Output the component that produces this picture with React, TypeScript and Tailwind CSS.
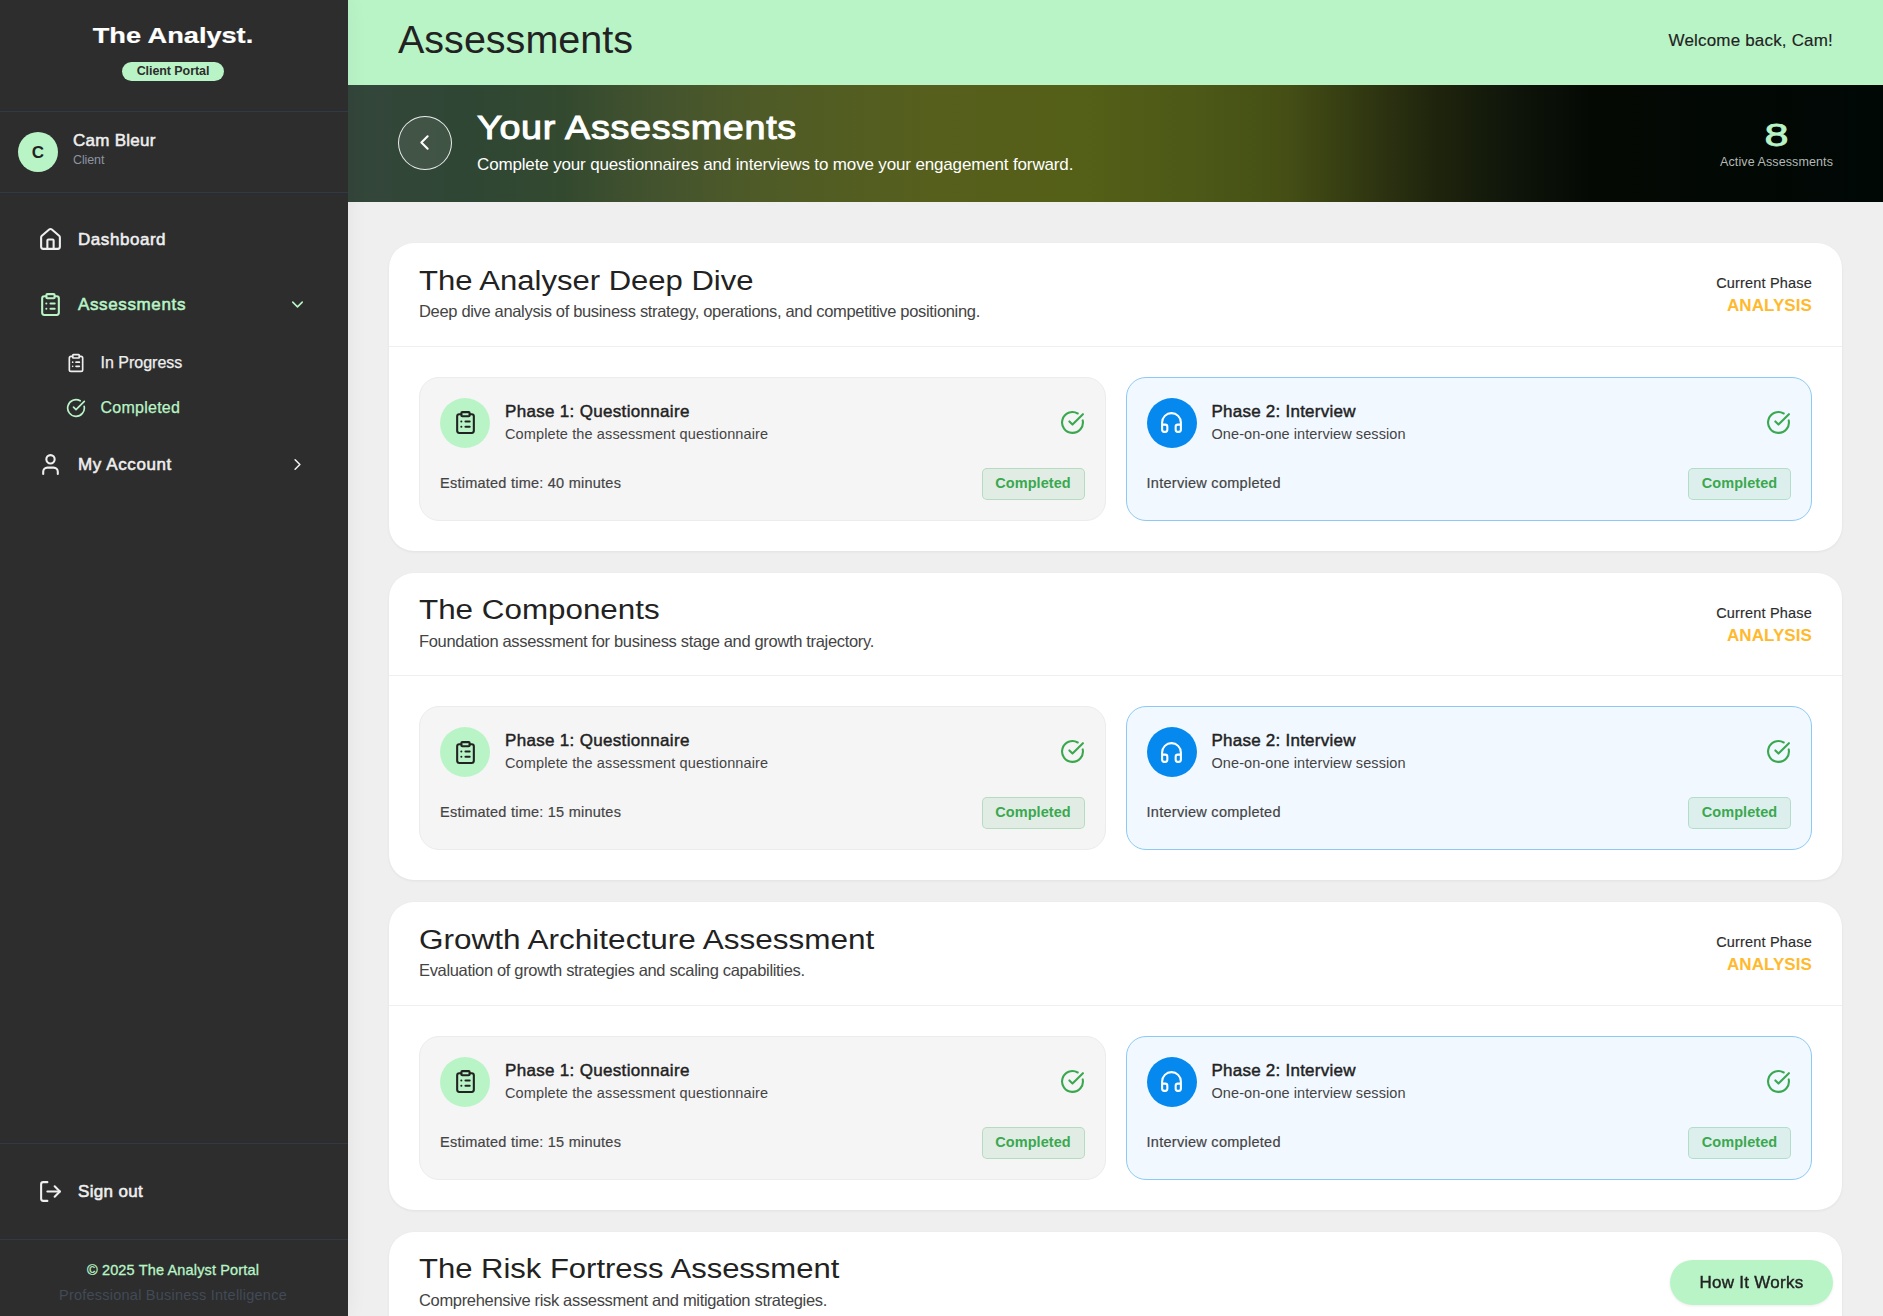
import React from "react";
import {
  ChevronDown,
  ChevronLeft,
  ChevronRight,
  CircleCheckBig,
  ClipboardList,
  Headphones,
  House,
  LogOut,
  User,
} from "lucide-react";

interface Assessment {
  title: string;
  titleClass: string;
  description: string;
  phase?: string;
  minutes?: number;
}

const assessments: Assessment[] = [
  {
    title: "The Analyser Deep Dive",
    titleClass: "scale-x-[1.149]",
    description: "Deep dive analysis of business strategy, operations, and competitive positioning.",
    phase: "ANALYSIS",
    minutes: 40,
  },
  {
    title: "The Components",
    titleClass: "scale-x-[1.162]",
    description: "Foundation assessment for business stage and growth trajectory.",
    phase: "ANALYSIS",
    minutes: 15,
  },
  {
    title: "Growth Architecture Assessment",
    titleClass: "scale-x-[1.167]",
    description: "Evaluation of growth strategies and scaling capabilities.",
    phase: "ANALYSIS",
    minutes: 15,
  },
  {
    title: "The Risk Fortress Assessment",
    titleClass: "scale-x-[1.148]",
    description: "Comprehensive risk assessment and mitigation strategies.",
  },
];

const Sidebar: React.FC = () => (
  <aside className="relative z-10 flex h-full w-[348px] shrink-0 flex-col bg-[#2d2d2d] text-[#efefef] shadow-[0_0_20px_rgba(0,0,0,0.06)]">
    {/* Brand */}
    <div className="flex h-[112px] flex-col items-center border-b border-[#2f3947] pt-[21px] pr-[2px]">
      <div className="origin-center scale-x-[1.234] text-[22px] leading-[30px] font-bold text-white [-webkit-text-stroke:0.2px]">
        The Analyst.
      </div>
      <span className="mt-[11px] flex h-[19px] w-[102px] justify-center rounded-full bg-[#b9f4c7] text-[12.5px] leading-[18px] font-bold tracking-[-0.07px] text-[#2d2d2d]">
        Client Portal
      </span>
    </div>

    {/* Current user */}
    <div className="flex h-[81px] gap-[15px] border-b border-[#2f3947] pt-5 pl-[18px]">
      <div className="flex size-10 items-center justify-center rounded-full bg-[#b9f4c7] text-[17px] leading-none font-bold text-[#222222]">
        C
      </div>
      <div className="-mt-[2px]">
        <p className="text-[17px] leading-[22px] tracking-[0.27px] [-webkit-text-stroke:0.5px]">Cam Bleur</p>
        <p className="text-[12.5px] leading-4 tracking-[-0.12px] text-[#8b93a1]">Client</p>
      </div>
    </div>

    <nav className="flex-1 pt-[14px]">
      <a href="#" className="flex h-[65px] items-center gap-[15px] pl-[38px]">
        <House size={25} />
        <span className="text-[17px] tracking-[0.55px] [-webkit-text-stroke:0.55px]">Dashboard</span>
      </a>
      <a href="#" className="flex h-[65px] items-center gap-[15px] pr-[41px] pl-[38px] text-[#b9f4c7]">
        <ClipboardList size={25} />
        <span className="flex-1 text-[17px] tracking-[0.63px] [-webkit-text-stroke:0.55px]">Assessments</span>
        <ChevronDown size={19} />
      </a>

      <div className="mt-[3px]">
        <a href="#" className="flex h-[45px] items-center gap-[14.5px] pl-[66px]">
          <ClipboardList size={20} />
          <span className="text-[16px] [-webkit-text-stroke:0.25px]">In Progress</span>
        </a>
        <a href="#" className="flex h-[45px] items-center gap-[14.5px] pl-[66px] text-[#b9f4c7]">
          <CircleCheckBig size={20} />
          <span className="text-[16px] tracking-[0.25px] [-webkit-text-stroke:0.25px]">Completed</span>
        </a>
      </div>

      <a href="#" className="mt-[2px] flex h-[65px] items-center gap-[15px] pr-[41px] pl-[38px]">
        <User size={25} />
        <span className="flex-1 text-[17px] tracking-[0.6px] [-webkit-text-stroke:0.55px]">My Account</span>
        <ChevronRight size={19} />
      </a>
    </nav>

    <div className="h-24 border-t border-[#2f3a44]">
      <button className="flex h-[95px] items-center gap-[15px] pl-[38px]">
        <LogOut size={25} />
        <span className="text-[17px] tracking-[0.35px] [-webkit-text-stroke:0.55px]">Sign out</span>
      </button>
    </div>

    <div className="h-[77px] border-t border-[#2f3a44] pt-[18px] pr-[2px] text-center text-[14.5px] leading-[25px]">
      <p className="tracking-[0.15px] text-[#b9f4c7] [-webkit-text-stroke:0.3px]">© 2025 The Analyst Portal</p>
      <p className="tracking-[0.23px] text-[#414a57]">Professional Business Intelligence</p>
    </div>
  </aside>
);

const CompletedBadge: React.FC = () => (
  <span className="flex h-8 w-[103px] items-center justify-center rounded-[5px] border border-[#34a853]/25 bg-[#34a853]/10 text-[14.5px] font-bold tracking-[0.07px] text-[#3aa84f]">
    Completed
  </span>
);

interface PhaseProps {
  className: string;
  iconClass: string;
  icon: React.ReactNode;
  title: React.ReactNode;
  subtitle: React.ReactNode;
  note: React.ReactNode;
}

const Phase: React.FC<PhaseProps> = ({ className, iconClass, icon, title, subtitle, note }) => (
  <div className={`h-36 rounded-[20px] border p-5 ${className}`}>
    <div className="flex items-center">
      <div className={`flex size-[50px] items-center justify-center rounded-full ${iconClass}`}>{icon}</div>
      <div className="mb-px ml-[15px] flex-1">
        {title}
        {subtitle}
      </div>
      <CircleCheckBig size={25} className="mb-px text-[#3aa84f]" />
    </div>
    <div className="mt-5 flex h-8 items-center justify-between text-[14.5px] text-[#444444]">
      {note}
      <CompletedBadge />
    </div>
  </div>
);

const AssessmentCard: React.FC<{ item: Assessment }> = ({ item }) => (
  <section className="h-[307.8px] shrink-0 rounded-[25px] bg-white shadow-[0_1px_3px_rgba(0,0,0,0.06)]">
    <div className="flex h-[103.6px] justify-between border-b border-[#efefef] px-[30px]">
      <div className="pt-[18.8px]">
        <h3 className={`w-fit origin-left text-[27px] leading-[38px] whitespace-nowrap text-[#222222] ${item.titleClass}`}>
          {item.title}
        </h3>
        <p className="-mt-[0.8px] text-[16.5px] leading-6 tracking-[-0.33px] text-[#444444]">{item.description}</p>
      </div>
      {item.phase && (
        <div className="pt-[29px] text-right">
          <p className="text-[14.5px] leading-[22px] tracking-[0.18px] text-[#2d2d2d] [-webkit-text-stroke:0.15px]">Current Phase</p>
          <p className="text-[17px] leading-6 font-bold tracking-[0.08px] text-[#ffb92e]">{item.phase}</p>
        </div>
      )}
    </div>
    {item.minutes && (
      <div className="grid grid-cols-2 gap-5 p-[30px]">
        <Phase
          className="border-[#ececec] bg-[#f5f5f5]"
          iconClass="bg-[#b9f4c7] text-[#222222]"
          icon={<ClipboardList size={25} />}
          title={<h4 className="text-[17px] leading-6 tracking-[0.32px] text-[#222222] [-webkit-text-stroke:0.45px]">Phase 1: Questionnaire</h4>}
          subtitle={<p className="text-[14.5px] leading-[21px] tracking-[0.12px] text-[#444444]">Complete the assessment questionnaire</p>}
          note={<p className="tracking-[0.24px] [-webkit-text-stroke:0.2px]">Estimated time: {item.minutes} minutes</p>}
        />
        <Phase
          className="border-[#8ccaf5] bg-[#f1f8ff]"
          iconClass="bg-[#0589ee] text-white"
          icon={<Headphones size={25} />}
          title={<h4 className="text-[17px] leading-6 tracking-[0.24px] text-[#222222] [-webkit-text-stroke:0.45px]">Phase 2: Interview</h4>}
          subtitle={<p className="text-[14.5px] leading-[21px] tracking-[0.08px] text-[#444444]">One-on-one interview session</p>}
          note={<p className="tracking-[0.28px] [-webkit-text-stroke:0.2px]">Interview completed</p>}
        />
      </div>
    )}
  </section>
);

export default function App() {
  return (
    <div className="flex h-[1316px] w-[1883px] overflow-hidden bg-[#efefef] font-['Liberation_Sans',Arial,sans-serif]">
      <Sidebar />

      <main className="flex min-w-0 flex-1 flex-col">
        <header className="flex h-[85px] shrink-0 items-center justify-between bg-[#b9f4c7] px-[50px] text-[#222222]">
          <h1 className="mb-[5px] origin-left scale-x-[1.04] text-[38px] leading-none">Assessments</h1>
          <p className="mb-1 text-[17px] tracking-[0.18px] [-webkit-text-stroke:0.15px]">Welcome back, Cam!</p>
        </header>

        {/* Hero */}
        <div className="flex h-[117px] shrink-0 items-center bg-[linear-gradient(90deg,#34463b_0%,#2f4634_8%,#33492f_14%,#43532e_20%,#4f5b27_27%,#565f1c_38%,#545f17_48%,#4c5917_55%,#454f15_61%,#2a3010_68%,#1e240c_71%,#0f150a_76%,#050904_81%,#020804_90%,#000805_100%)] px-[50px] text-white">
          <button className="mb-[2px] flex size-[54px] items-center justify-center rounded-full border border-white/90 bg-white/8 pr-[2px]">
            <ChevronLeft size={25} />
          </button>
          <div className="-mt-[3px] ml-[25px] flex-1">
            <h2 className="w-fit origin-left scale-x-[1.16] text-[32.5px] leading-[45px] whitespace-nowrap tracking-[0.6px] [-webkit-text-stroke:1px]">
              Your Assessments
            </h2>
            <p className="text-[17px] leading-7 tracking-[-0.15px]">
              Complete your questionnaires and interviews to move your engagement forward.
            </p>
          </div>
          <div className="text-center">
            <p className="-mt-px mb-px scale-x-[1.35] text-[32px] leading-9 text-[#b9f4c7] [-webkit-text-stroke:0.8px]">8</p>
            <p className="text-[12.5px] leading-4 tracking-[0.1px] text-[#b4b8b4]">Active Assessments</p>
          </div>
        </div>

        <div className="flex flex-1 flex-col gap-[21.75px] px-[41px] pt-[41px]">
          {assessments.map((item) => (
            <AssessmentCard key={item.title} item={item} />
          ))}
        </div>
      </main>

      <button className="fixed top-[1260px] right-[50px] z-20 h-[45px] w-[163px] rounded-full bg-[#b9f4c7] text-[17px] tracking-[0.27px] text-[#222222] shadow-[0_1px_3px_rgba(0,0,0,0.08)] [-webkit-text-stroke:0.4px]">
        How It Works
      </button>
    </div>
  );
}
